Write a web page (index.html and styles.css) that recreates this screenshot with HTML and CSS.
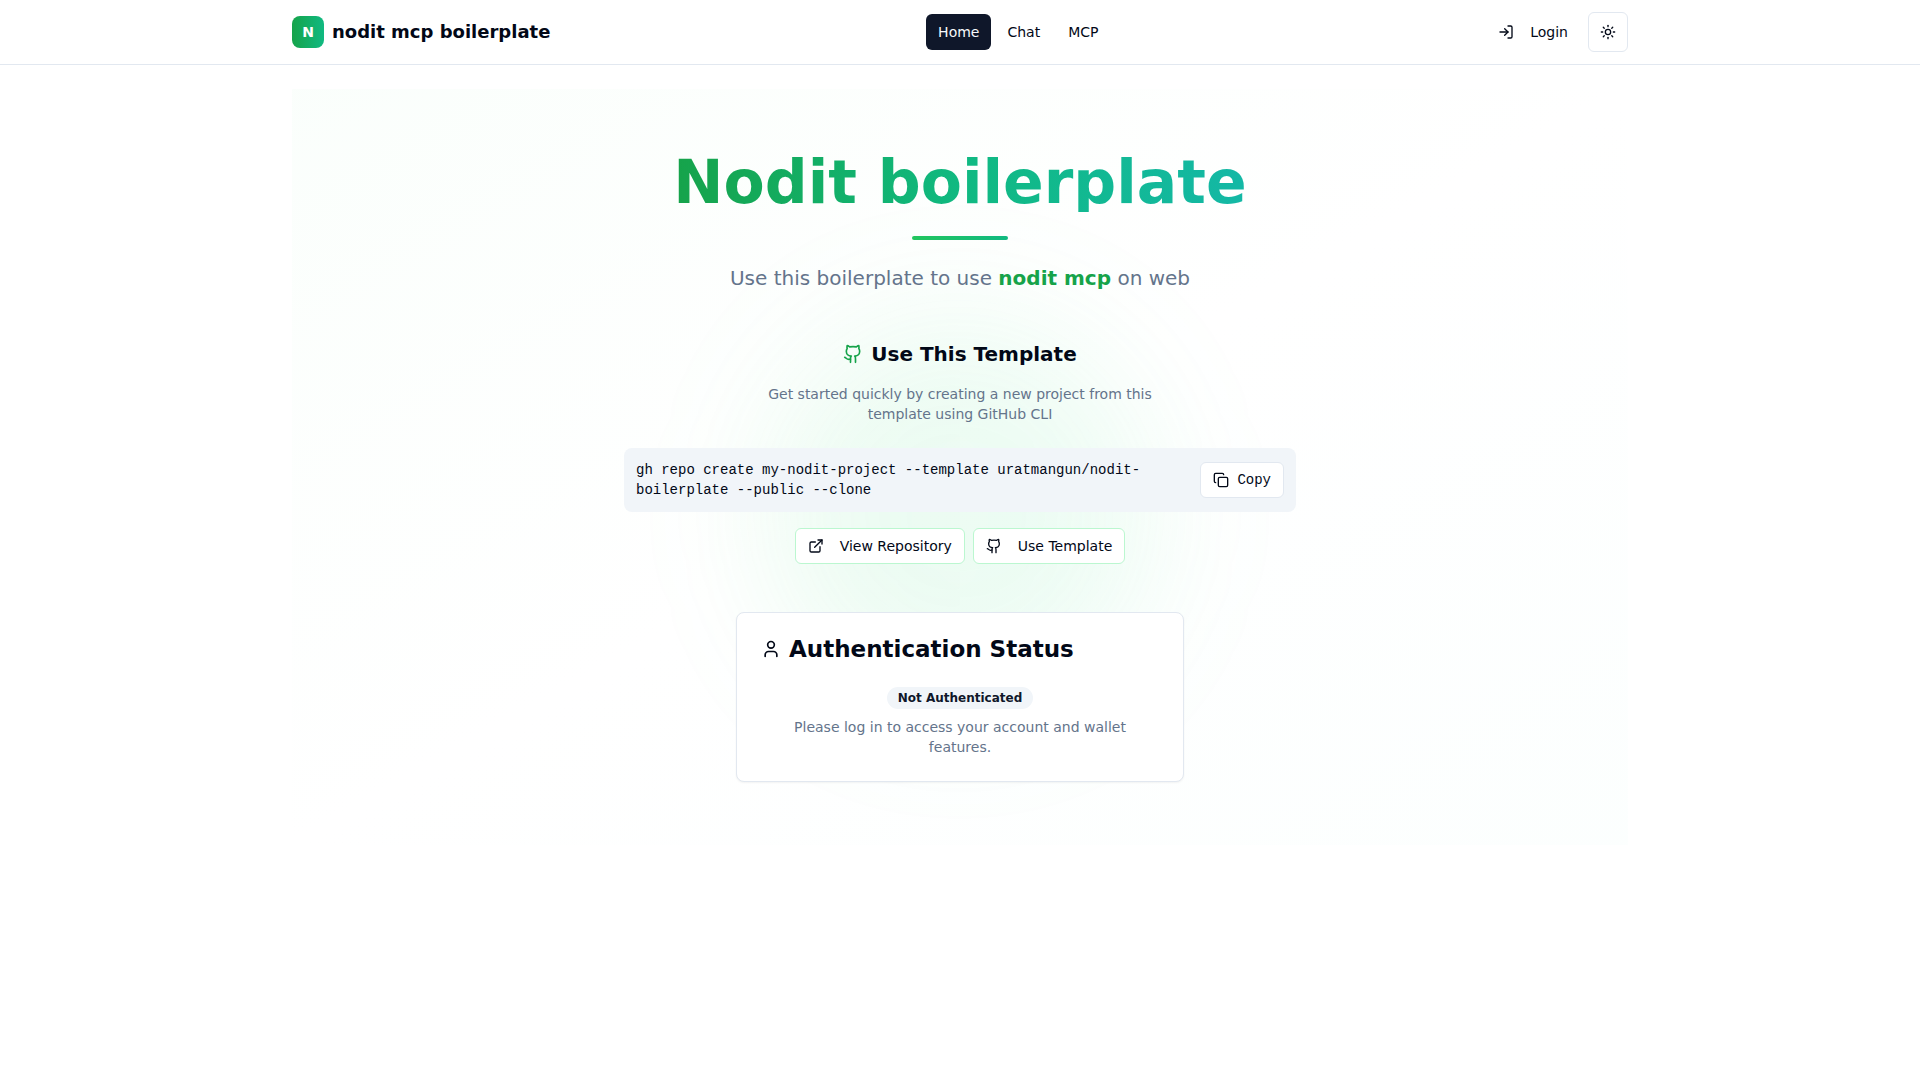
FILE: index.html
```html
<!DOCTYPE html>
<html lang="en">
<head>
<meta charset="utf-8">
<meta name="viewport" content="width=device-width, initial-scale=1">
<title>nodit mcp boilerplate</title>
<link rel="stylesheet" href="styles.css">
</head>
<body>
<svg class="sprite" aria-hidden="true">
  <symbol id="github" viewBox="0 0 24 24">
    <path d="M15 22v-4a4.8 4.8 0 0 0-1-3.500c3 0 6-2 6-5.500.08-1.250-.27-2.480-1-3.500.28-1.150.28-2.350 0-3.500 0 0-1 0-3 1.500-2.640-.5-5.360-.5-8 0C6 2 5 2 5 2c-.3 1.150-.3 2.350 0 3.500A5.403 5.403 0 0 0 4 9c0 3.500 3 5.500 6 5.500-.39.49-.68 1.050-.85 1.650-.17.6-.22 1.230-.15 1.850v4"/>
    <path d="M9 18c-4.510 2-5-2-7-2"/>
  </symbol>
</svg>

<header class="header">
  <div class="container header-row">
    <a class="brand" href="#">
      <span class="brand-mark">N</span>
      <span>nodit mcp boilerplate</span>
    </a>
    <nav class="nav">
      <a class="btn btn-ghost btn-active" href="#">Home</a>
      <a class="btn btn-ghost" href="#chat">Chat</a>
      <a class="btn btn-ghost" href="#mcp">MCP</a>
    </nav>
    <div class="actions">
      <button class="btn btn-ghost btn-spaced" type="button">
        <svg class="icon" viewBox="0 0 24 24"><path d="M15 3h4a2 2 0 0 1 2 2v14a2 2 0 0 1-2 2h-4"/><path d="m10 17 5-5-5-5"/><path d="M15 12H3"/></svg>
        Login
      </button>
      <button class="btn btn-outline btn-square" type="button" aria-label="Toggle theme">
        <svg class="icon" viewBox="0 0 24 24"><circle cx="12" cy="12" r="4"/><path d="M12 2v2"/><path d="M12 20v2"/><path d="m4.930 4.930 1.410 1.410"/><path d="m17.660 17.660 1.410 1.410"/><path d="M2 12h2"/><path d="M20 12h2"/><path d="m6.340 17.660-1.410 1.410"/><path d="m19.070 4.930-1.410 1.410"/></svg>
      </button>
    </div>
  </div>
</header>

<main class="container main">
  <section class="hero">
    <h1 class="title">Nodit boilerplate</h1>
    <div class="rule"></div>
    <p class="lead">Use this boilerplate to use <strong class="accent">nodit mcp</strong> on web</p>

    <section class="template">
      <h2 class="template-title">
        <svg class="icon icon-md accent"><use href="#github"/></svg>
        Use This Template
      </h2>
      <p class="note">Get started quickly by creating a new project from this template using GitHub CLI</p>
      <div class="command">
        <code>gh repo create my-nodit-project --template uratmangun/nodit-boilerplate --public --clone</code>
        <button class="btn btn-outline btn-copy" type="button">
          <svg class="icon" viewBox="0 0 24 24"><rect width="14" height="14" x="8" y="8" rx="2" ry="2"/><path d="M4 16c-1.100 0-2-.9-2-2V4c0-1.100.9-2 2-2h10c1.100 0 2 .9 2 2"/></svg>
          Copy
        </button>
      </div>
      <div class="links">
        <a class="btn btn-outline btn-green btn-spaced" href="#repository">
          <svg class="icon" viewBox="0 0 24 24"><path d="M15 3h6v6"/><path d="M10 14 21 3"/><path d="M18 13v6a2 2 0 0 1-2 2H5a2 2 0 0 1-2-2V8a2 2 0 0 1 2-2h6"/></svg>
          View Repository
        </a>
        <a class="btn btn-outline btn-green btn-spaced" href="#template">
          <svg class="icon"><use href="#github"/></svg>
          Use Template
        </a>
      </div>
    </section>

    <section class="card">
      <h2 class="card-title">
        <svg class="icon icon-md" viewBox="0 0 24 24"><path d="M19 21v-2a4 4 0 0 0-4-4H9a4 4 0 0 0-4 4v2"/><circle cx="12" cy="7" r="4"/></svg>
        Authentication Status
      </h2>
      <div class="card-body">
        <span class="badge">Not Authenticated</span>
        <p class="note">Please log in to access your account and wallet features.</p>
      </div>
    </section>
  </section>
</main>
</body>
</html>
```

FILE: styles.css
```css
*, *::before, *::after { box-sizing: border-box; }

:root {
  --text: #020817;
  --muted: #64748b;
  --border: #e2e8f0;
  --surface: #f1f5f9;
  --dark: #0f172a;
  --green: #16a34a;
  --mono: "Liberation Mono", monospace;
}

body {
  margin: 0;
  min-height: 100vh;
  background: #fff;
  color: var(--text);
  font: 14px/20px "DejaVu Sans", sans-serif;
}

h1, h2, p { margin: 0; }
a { color: inherit; text-decoration: none; }
.sprite { display: none; }

.container {
  max-width: 1400px;
  margin: 0 auto;
  padding: 0 32px;
}

.icon {
  width: 16px;
  height: 16px;
  flex: none;
  fill: none;
  stroke: currentColor;
  stroke-width: 2;
  stroke-linecap: round;
  stroke-linejoin: round;
}
.icon-md { width: 20px; height: 20px; }
.accent { color: var(--green); }

/* Header */
.header { border-bottom: 1px solid var(--border); }
.header-row {
  display: flex;
  align-items: center;
  justify-content: space-between;
  height: 64px;
}
.brand {
  display: flex;
  align-items: center;
  gap: 8px;
  font-size: 18px;
  line-height: 28px;
  font-weight: 700;
}
.brand-mark {
  display: grid;
  place-items: center;
  width: 32px;
  height: 32px;
  border-radius: 8px;
  background: linear-gradient(to right, #16a34a, #10b981);
  color: #fff;
  font-size: 14px;
}
.nav { display: flex; gap: 4px; }
.actions { display: flex; align-items: center; gap: 8px; }

/* Buttons */
.btn {
  display: inline-flex;
  align-items: center;
  justify-content: center;
  gap: 8px;
  height: 36px;
  padding: 0 12px;
  border: 0;
  border-radius: 6px;
  background: transparent;
  color: var(--text);
  font: inherit;
  white-space: nowrap;
  cursor: pointer;
}
.btn-active { background: var(--dark); color: #f8fafc; }
.btn-outline { border: 1px solid var(--border); background: #fff; }
.btn-green { border-color: #bbf7d0; }
.btn-spaced { gap: 16px; }
.btn-square { width: 40px; height: 40px; padding: 0; }
.btn-copy { font-family: var(--mono); }

/* Hero */
.main { padding-top: 24px; padding-bottom: 24px; }
.hero {
  position: relative;
  isolation: isolate;
  display: flex;
  flex-direction: column;
  align-items: center;
  padding: 63px 16px;
  background: linear-gradient(to bottom right, #f0fdf44d, transparent, #f0fdfa33);
  text-align: center;
}
.hero::before {
  content: "";
  position: absolute;
  z-index: -1;
  top: 56%;
  left: 50%;
  width: 384px;
  height: 384px;
  border-radius: 50%;
  background: linear-gradient(to right, #4ade801b, #4ade8c1a);
  filter: blur(64px);
  transform: translate(-50%, -50%);
}
.title {
  background: linear-gradient(to right, #16a34a, #10b981, #14b8a6);
  -webkit-background-clip: text;
  background-clip: text;
  color: transparent;
  font-size: 60px;
  line-height: 60px;
}
.rule {
  width: 96px;
  height: 4px;
  margin: 24px 0;
  border-radius: 2px;
  background: linear-gradient(to right, #22c55e, #10b981);
}
.lead { color: var(--muted); font-size: 20px; line-height: 28px; }
.template {
  display: flex;
  flex-direction: column;
  align-items: center;
  width: 100%;
  max-width: 672px;
  margin: 48px 0;
}
.template-title {
  display: flex;
  align-items: center;
  gap: 8px;
  margin-bottom: 16px;
  font-size: 20px;
  line-height: 28px;
}
.note { max-width: 390px; color: var(--muted); }
.command {
  display: flex;
  align-items: center;
  justify-content: space-between;
  gap: 16px;
  width: 100%;
  margin: 24px 0 16px;
  padding: 12px;
  border-radius: 8px;
  background: var(--surface);
  font-family: var(--mono);
  text-align: left;
}
.command code { font: inherit; }
.links { display: flex; flex-wrap: wrap; justify-content: center; gap: 8px; }

/* Status card */
.card {
  width: 100%;
  max-width: 448px;
  padding: 24px;
  border: 1px solid var(--border);
  border-radius: 8px;
  background: #fff;
  box-shadow: 0 1px 2px #0000000d;
}
.card-title {
  display: flex;
  align-items: center;
  gap: 8px;
  margin-bottom: 26px;
  font-size: 23px;
  line-height: 24px;
}
.card-body {
  display: flex;
  flex-direction: column;
  align-items: center;
  gap: 8px;
}
.badge {
  padding: 3px 11px;
  border-radius: 11px;
  background: var(--surface);
  color: var(--dark);
  font-size: 12px;
  line-height: 16px;
  font-weight: 700;
}
```
